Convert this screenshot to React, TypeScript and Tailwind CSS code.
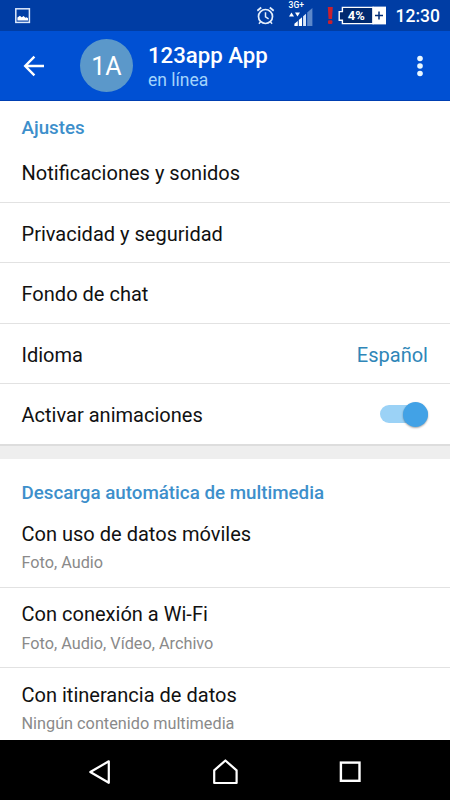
import { useState } from 'react';
import clsx from 'clsx';

/** Props for a single-line settings row. */
interface SettingRowProps {
  label: string;
  last?: boolean;
  children?: React.ReactNode;
}

/** Props for a two-line row in the download section. */
interface DownloadRowProps {
  label: string;
  detail: string;
  last?: boolean;
}

const downloads: DownloadRowProps[] = [
  { label: 'Con uso de datos móviles', detail: 'Foto, Audio' },
  { label: 'Con conexión a Wi-Fi', detail: 'Foto, Audio, Vídeo, Archivo' },
  { label: 'Con itinerancia de datos', detail: 'Ningún contenido multimedia' },
];

function StatusBar() {
  return (
    <div className="flex h-[31px] shrink-0 items-center bg-[#003da4] text-white">
      <svg className="ml-[15px]" width="16" height="16" viewBox="0 0 16 16" aria-hidden="true">
        <rect x="0.8" y="0.8" width="13.6" height="13.6" fill="none" stroke="#dce9fb" strokeWidth="1.5" />
        <path d="M2.4 12.6V9.6l2.5-1.8 1.8 1.4L8.6 8l1.8 1.8 1.2-.5 1.4 1v2.3z" fill="#fff" />
      </svg>

      {/* Alarm */}
      <svg className="ml-auto" width="19" height="20" viewBox="0 0 19 20" fill="none" stroke="#e4effc" aria-hidden="true">
        <circle cx="8.5" cy="10.5" r="7" strokeWidth="1.7" />
        <path d="M8.5 6.3v4.6l3.1 1.9" strokeWidth="1.5" />
        <path d="M.3 4.7 4.2 1.5M16.7 4.7l-3.9-3.2" strokeWidth="1.8" />
        <path d="m3.6 15.7-1.7 2M13.4 15.7l1.7 2" strokeWidth="1.4" />
      </svg>

      {/* Mobile signal */}
      <div className="ml-[13px] flex h-full w-[25px] flex-col">
        <span className="mt-px h-[9px] text-[8.5px] leading-[9px] font-medium">3G+</span>
        <svg className="-mt-[3px]" width="25" height="20" viewBox="0 0 25 20" aria-hidden="true">
          <path d="M0 9.6 2.5 5.4 5 9.6zM6 5.4h5L8.5 9.6z" fill="#fff" />
          <path d="M5.4 19v-2.3l3.4-2.6V19zM9.8 19v-6.1l3.2-2.6V19z" fill="#fff" />
          <path d="M14.1 19V9.3L17 6.7V19z" fill="#d7e4f7" />
          <path d="M18.2 19V5.6L23.4 1v18z" fill="#5d88ca" />
        </svg>
      </div>

      <svg className="ml-[13px]" width="7" height="19" viewBox="0 0 7 19" aria-hidden="true">
        <path d="M.8 1h5L5 13H1.6z" fill="#c9202f" />
        <rect x="1" y="14.3" width="4.4" height="3.6" rx="1" fill="#c9202f" />
      </svg>

      {/* Battery */}
      <svg className="ml-[4px]" width="49" height="19" viewBox="0 0 49 19" aria-hidden="true">
        <path d="M4.4 1.4H35v16.2H4.4v-3.4H1.2V5.6h3.2z" fill="#00296f" stroke="#fff" strokeWidth="1.4" />
        <rect x="34.5" y="0.6" width="13.5" height="17.8" fill="#fff" />
        <path d="M41 5.5v8M37 9.5h8" stroke="#002d78" strokeWidth="1.5" />
        <text x="18.3" y="14" textAnchor="middle" fontSize="13" fontWeight="700" fill="#fff" textLength="17" lengthAdjust="spacingAndGlyphs">
          4%
        </text>
      </svg>

      <span className="mt-[2px] mr-[10px] ml-[9px] text-[17.5px] leading-none font-medium">12:30</span>
    </div>
  );
}

function Header() {
  return (
    <header className="flex h-[70px] shrink-0 items-center border-b border-[#003fb2] bg-[#0050d3] text-white">
      <button type="button" aria-label="Atrás" className="ml-[23px]">
        <svg width="22" height="22" viewBox="0 0 22 22" fill="none" stroke="#fff" strokeWidth="2.4">
          <path d="M21 11H2.5M11.4 1.6 2.2 11l9.2 9.4" />
        </svg>
      </button>
      <div className="ml-[35px] flex size-[53px] items-center justify-center rounded-full bg-[#5b98ca] pt-[2px] text-[25px]">
        1A
      </div>
      <div className="mt-[3px] ml-[15px] flex flex-col">
        <h1 className="text-[22.2px] leading-[26px] font-medium">123app App</h1>
        <span className="text-[17.5px] leading-[25px] text-[#a3d4fc]">en línea</span>
      </div>
      <button type="button" aria-label="Más opciones" className="mr-[27px] ml-auto">
        <svg width="6" height="22" viewBox="0 0 6 22" fill="#e9f7ff">
          <circle cx="3" cy="3.5" r="2.8" />
          <circle cx="3" cy="11" r="2.8" />
          <circle cx="3" cy="18.5" r="2.8" />
        </svg>
      </button>
    </header>
  );
}

function SettingRow({ label, last, children }: SettingRowProps) {
  return (
    <div
      className={clsx(
        'flex items-center justify-between pr-[22px] pl-[21.5px] text-[20.05px]',
        last ? 'h-[60px]' : 'h-[60.5px] border-b border-[#e2e2e2] pt-[3px]',
      )}
    >
      <span className={clsx(last && 'pt-[2px]')}>{label}</span>
      {children}
    </div>
  );
}

function DownloadRow({ label, detail, last }: DownloadRowProps) {
  return (
    <div className={clsx('flex h-[80.5px] flex-col pt-[12.5px] pl-[21.5px]', !last && 'border-b border-[#e2e2e2]')}>
      <span className="text-[20.05px] leading-[28px]">{label}</span>
      <span className="mt-[3.5px] text-[16.25px] leading-[24px] text-[#8a8a8a]">{detail}</span>
    </div>
  );
}

function NavigationBar() {
  return (
    <nav className="flex h-[60px] shrink-0 items-center justify-between bg-black pt-[3px] pr-[89px] pl-[88px] text-white">
      <svg width="24" height="26" viewBox="0 0 24 26" fill="none" stroke="#fff" strokeWidth="2.2" strokeLinejoin="round">
        <path d="M20.8 2.3v21.5L2.3 13z" />
      </svg>
      <svg width="26" height="26" viewBox="0 0 26 26" fill="none" stroke="#fff" strokeWidth="2.2" strokeLinejoin="round">
        <path d="M1.2 24V11.4l11.2-9.9 11.2 9.9V24z" />
      </svg>
      <svg width="22" height="22" viewBox="0 0 22 22" fill="none" stroke="#fff" strokeWidth="2.4">
        <rect x="1.9" y="1.6" width="18.6" height="18.2" />
      </svg>
    </nav>
  );
}

export default function App() {
  const [animated, setAnimated] = useState(true);

  return (
    <div className="flex h-[800px] w-[450px] flex-col overflow-hidden bg-white font-['Roboto',sans-serif] text-[#111]">
      <StatusBar />
      <Header />

      <main className="min-h-0 flex-1 overflow-hidden">
        <section>
          <h2 className="h-[41px] pt-[13px] pl-[21.5px] text-[18.75px] leading-[28px] font-medium text-[#3d8fcb]">
            Ajustes
          </h2>
          <SettingRow label="Notificaciones y sonidos" />
          <SettingRow label="Privacidad y seguridad" />
          <SettingRow label="Fondo de chat" />
          <SettingRow label="Idioma">
            <span className="text-[#2f86b8]">Español</span>
          </SettingRow>
          <SettingRow label="Activar animaciones" last>
            <button
              type="button"
              role="switch"
              aria-checked={animated}
              aria-label="Activar animaciones"
              onClick={() => setAnimated(!animated)}
              className={clsx(
                'flex h-[18px] w-[48px] items-center rounded-full',
                animated ? 'justify-end bg-[#9bd2f6]' : 'justify-start bg-[#c7c7c7]',
              )}
            >
              <span
                className={clsx(
                  'size-[25px] shrink-0 rounded-full shadow-[0_1px_2px_rgba(0,0,0,0.35)]',
                  animated ? 'bg-[#42a2e6]' : 'bg-white',
                )}
              />
            </button>
          </SettingRow>
        </section>

        <div className="h-[15px] border-t-2 border-[#dddddd] bg-[#eeeeee]" />

        <section>
          <h2 className="h-[48px] pt-[20px] pl-[21.5px] text-[18.75px] leading-[28px] font-medium text-[#3d8fcb]">
            Descarga automática de multimedia
          </h2>
          {downloads.map((item, i) => (
            <DownloadRow key={item.label} {...item} last={i === downloads.length - 1} />
          ))}
        </section>
      </main>

      <NavigationBar />
    </div>
  );
}
